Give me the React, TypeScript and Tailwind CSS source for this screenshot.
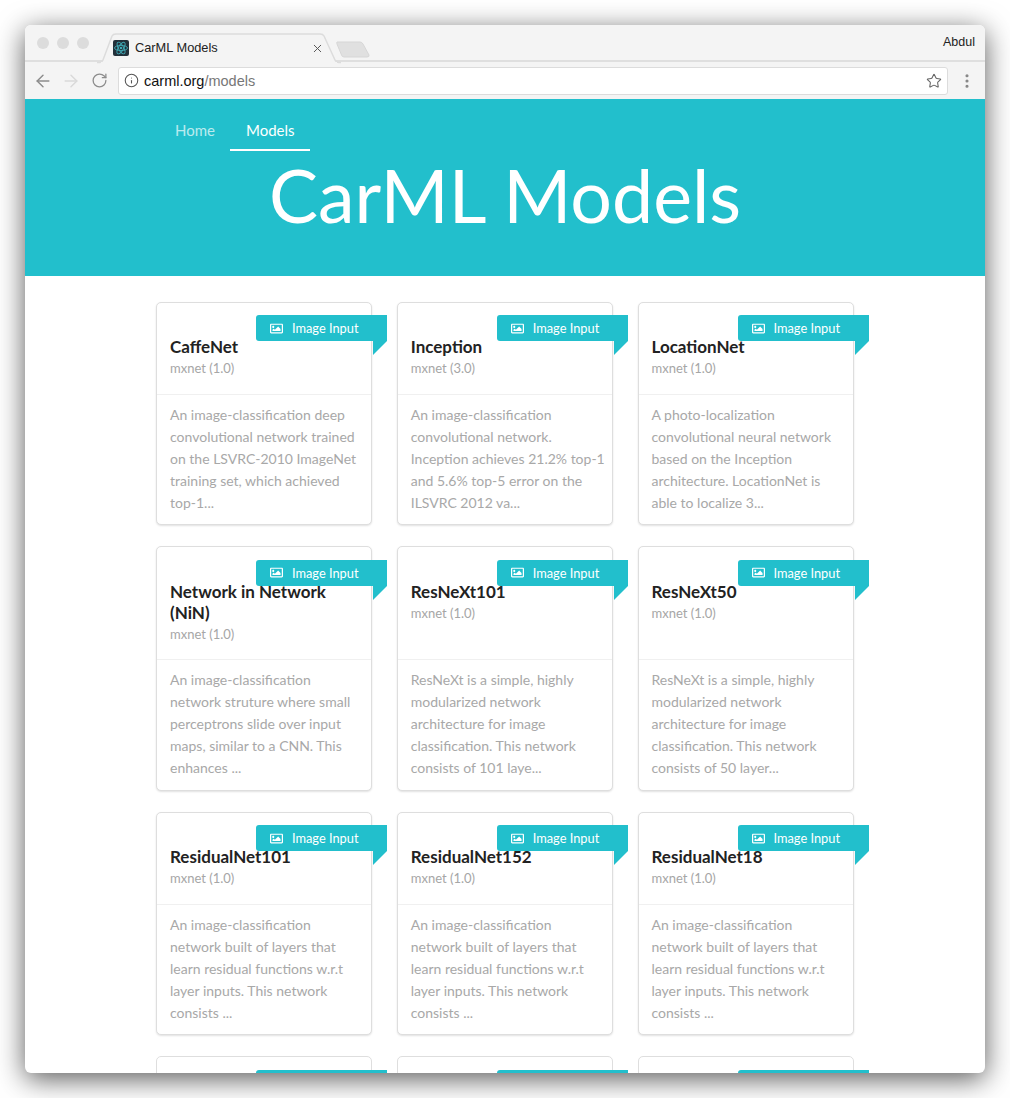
import React from 'react';
import { ArrowLeft, ArrowRight, RotateCw, Info, Star, X, EllipsisVertical } from 'lucide-react';
import { FaRegImage } from 'react-icons/fa';

type Model = { name: string; version: string; lines: string[] };

const residualLines = [
  'An image-classification',
  'network built of layers that',
  'learn residual functions w.r.t',
  'layer inputs. This network',
  'consists ...',
];

const rows: { tall: boolean; models: Model[] }[] = [
  {
    tall: false,
    models: [
      { name: 'CaffeNet', version: 'mxnet (1.0)', lines: ['An image-classification deep', 'convolutional network trained', 'on the LSVRC-2010 ImageNet', 'training set, which achieved', 'top-1...'] },
      { name: 'Inception', version: 'mxnet (3.0)', lines: ['An image-classification', 'convolutional network.', 'Inception achieves 21.2% top-1', 'and 5.6% top-5 error on the', 'ILSVRC 2012 va...'] },
      { name: 'LocationNet', version: 'mxnet (1.0)', lines: ['A photo-localization', 'convolutional neural network', 'based on the Inception', 'architecture. LocationNet is', 'able to localize 3...'] },
    ],
  },
  {
    tall: true,
    models: [
      { name: 'Network in Network (NiN)', version: 'mxnet (1.0)', lines: ['An image-classification', 'network struture where small', 'perceptrons slide over input', 'maps, similar to a CNN. This', 'enhances ...'] },
      { name: 'ResNeXt101', version: 'mxnet (1.0)', lines: ['ResNeXt is a simple, highly', 'modularized network', 'architecture for image', 'classification. This network', 'consists of 101 laye...'] },
      { name: 'ResNeXt50', version: 'mxnet (1.0)', lines: ['ResNeXt is a simple, highly', 'modularized network', 'architecture for image', 'classification. This network', 'consists of 50 layer...'] },
    ],
  },
  {
    tall: false,
    models: [
      { name: 'ResidualNet101', version: 'mxnet (1.0)', lines: residualLines },
      { name: 'ResidualNet152', version: 'mxnet (1.0)', lines: residualLines },
      { name: 'ResidualNet18', version: 'mxnet (1.0)', lines: residualLines },
    ],
  },
];

const Ribbon = ({ label }: { label?: string }) => (
  <div className="absolute top-[12.5px] left-[99px] w-[131px]">
    <div className="flex h-[26px] items-center gap-[9px] rounded-l-[3px] bg-[#22bfcc] pl-[14px] text-[12.8px] text-white">
      {label && <FaRegImage size={13} />}
      {label && <span className="pt-[2px]">{label}</span>}
    </div>
    <svg className="ml-[117px] block" width="14" height="14" viewBox="0 0 14 14">
      <polygon points="0,0 14,0 0,14" fill="#22bfcc" />
    </svg>
  </div>
);

const ModelCard = ({ model, tall }: { model: Model; tall: boolean }) => (
  <div className="relative h-fit w-[216px] rounded-[5px] border border-[#dedede] bg-white shadow-[0_1px_2px_rgba(0,0,0,0.12)]">
    <Ribbon label="Image Input" />
    <div className={`border-b border-[#f0f0f0] px-[13px] pt-[33.5px] ${tall ? 'h-[113px]' : 'h-[92px]'}`}>
      <div className="font-['Lato',sans-serif] text-[17px] leading-[21px] font-bold text-[#222]">{model.name}</div>
      <div className="mt-[1px] text-[13px] leading-[21px] text-[#a6a6a6]">{model.version}</div>
    </div>
    <div className="pt-[9px] pb-[10.5px] pl-[13px] text-[14px] leading-[22px] text-[#a8a8a8]">
      {model.lines.map((line, i) => (
        <div key={i} className="whitespace-nowrap">
          {line}
        </div>
      ))}
    </div>
  </div>
);

const Favicon = () => (
  <svg width="16" height="16" viewBox="0 0 16 16" className="shrink-0 rounded-[2px] bg-[#22303a]">
    <g fill="none" stroke="#3fa9b5" strokeWidth="0.9">
      <ellipse cx="8" cy="8" rx="6.5" ry="2.6" />
      <ellipse cx="8" cy="8" rx="6.5" ry="2.6" transform="rotate(60 8 8)" />
      <ellipse cx="8" cy="8" rx="6.5" ry="2.6" transform="rotate(120 8 8)" />
    </g>
    <circle cx="8" cy="8" r="1.3" fill="#3fa9b5" />
  </svg>
);

const BrowserBar = () => (
  <div className="bg-[#f4f4f4] text-[#222]">
    {/* Tab strip */}
    <div className="relative flex h-[37px] items-center border-b-2 border-[#dfdfdf] pr-[10px]">
      <div className="flex gap-[8px] pl-[12px]">
        <div className="h-[12px] w-[12px] rounded-full bg-[#dcdcdc]" />
        <div className="h-[12px] w-[12px] rounded-full bg-[#dcdcdc]" />
        <div className="h-[12px] w-[12px] rounded-full bg-[#dcdcdc]" />
      </div>
      <div className="absolute top-[8px] left-[72px]">
        <svg width="244" height="31" viewBox="0 0 244 31" className="block">
          <path d="M0,29.5 L3,29.5 Q5,29.5 6,27 L15,3 Q16,1 19,1 L223,1 Q226,1 227,3 L238,27 Q239,29.5 242,29.5 L244,29.5" fill="#f4f4f4" stroke="#dcdcdc" strokeWidth="1.5" />
          <rect x="4" y="29" width="236" height="3" fill="#f4f4f4" />
        </svg>
        <div className="absolute top-[7px] left-[16px] flex w-[211px] items-center">
          <Favicon />
          <span className="ml-[6px] font-['Liberation_Sans',sans-serif] text-[12.8px] leading-[16px]">CarML Models</span>
          <X size={13} strokeWidth={1.8} className="ml-auto text-[#555]" />
        </div>
      </div>
      <svg width="34" height="17" viewBox="0 0 34 17" className="absolute top-[16px] left-[311px]">
        <path d="M1,1 L24,1 Q26,1 27,3 L33,14 Q33.5,16 31,16 L8,16 Q6,16 5.5,14 L1,3 Q0.5,1 1,1 Z" fill="#e0e0e0" stroke="#d6d6d6" />
      </svg>
      <span className="ml-auto font-['Liberation_Sans',sans-serif] text-[12.5px]">Abdul</span>
    </div>
    {/* Address bar */}
    <div className="flex h-[37px] items-center pl-[4px]">
      <div className="flex w-[28px] justify-center">
        <ArrowLeft size={20} strokeWidth={1.7} className="text-[#8c8c8c]" />
      </div>
      <div className="flex w-[28px] justify-center">
        <ArrowRight size={20} strokeWidth={1.7} className="text-[#d9d9d9]" />
      </div>
      <div className="flex w-[28px] justify-center">
        <RotateCw size={17} strokeWidth={1.8} className="text-[#8c8c8c]" />
      </div>
      <div className="ml-[5px] flex h-[28px] w-[830px] items-center rounded-[3px] border border-[#dcdcdc] bg-white pr-[5px] pl-[5px]">
        <Info size={15} strokeWidth={1.7} className="text-[#555]" />
        <span className="ml-[5px] pt-[2px] font-['Liberation_Sans',sans-serif] text-[14.5px] text-[#111]">
          carml.org<span className="text-[#777]">/models</span>
        </span>
        <Star size={16} strokeWidth={1.6} className="ml-auto text-[#666]" />
      </div>
      <EllipsisVertical size={18} strokeWidth={2.2} className="ml-[10px] text-[#888]" />
    </div>
  </div>
);

export default function App() {
  return (
    <div className="h-[1098px] w-[1010px] overflow-hidden bg-white p-[25px] font-['Lato',sans-serif]">
      <div className="h-[1048px] w-[960px] overflow-hidden rounded-[6px] bg-white shadow-[0_6px_28px_rgba(0,0,0,0.65)]">
        <BrowserBar />

        {/* Header */}
        <div className="h-[177px] bg-[#22bfcc] text-white">
          <nav className="flex pl-[134px] text-[15px]">
            <a className="flex h-[52px] items-center pt-[10px] pr-[15px] pl-[16px] text-white/70">Home</a>
            <a className="flex h-[52px] items-center border-b-2 border-white pt-[12px] pr-[15px] pl-[16px]">Models</a>
          </nav>
          <h1 className="text-center text-[73.5px] leading-[88px]">CarML Models</h1>
        </div>

        {/* Cards */}
        <div className="grid grid-cols-[216px_216px_216px] gap-x-[24.75px] gap-y-[21px] pt-[25.5px] pl-[131px]">
          {rows.map((row) =>
            row.models.map((model) => <ModelCard key={model.name} model={model} tall={row.tall} />)
          )}
          {[0, 1, 2].map((i) => (
            <div key={i} className="relative h-[100px] w-[216px] rounded-[5px] border border-[#dedede] bg-white">
              <Ribbon />
            </div>
          ))}
        </div>
      </div>
    </div>
  );
}
